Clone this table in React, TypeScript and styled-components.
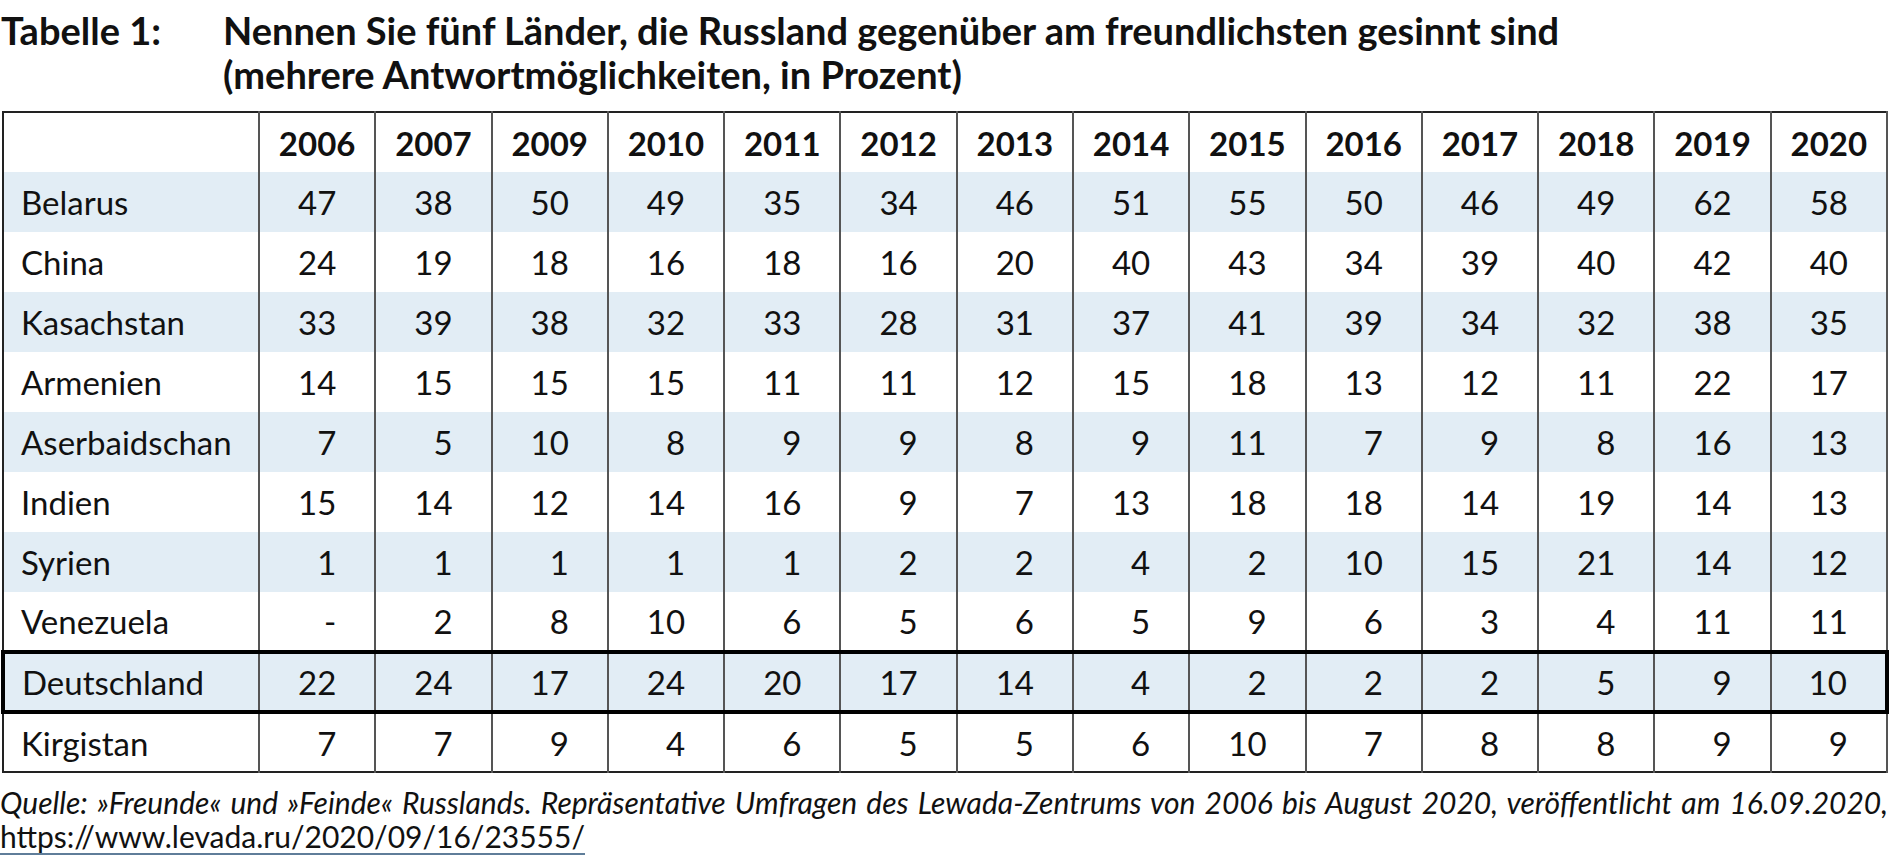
import { createGlobalStyle, styled } from "styled-components";

const GlobalStyle = createGlobalStyle`
  html, body {
    margin: 0;
    padding: 0;
    background: #ffffff;
  }
  body {
    font-family: Lato, "Open Sans", "Liberation Sans", sans-serif;
    color: #111111;
  }
`;

const Page = styled.div`
  width: 1892px;
  padding-top: 8px;
`;

const Title = styled.div`
  display: grid;
  grid-template-columns: 222px 1fr;
  font-size: 38px;
  line-height: 44px;
  font-weight: 700;
  padding-left: 1px;
`;

const Table = styled.table`
  margin-top: 15px;
  margin-left: 1px;
  width: 1888px;
  table-layout: fixed;
  border-collapse: collapse;
  border: 2px solid #222;
  font-size: 33px;
`;

const Row = styled.tr<{ $striped?: boolean; $marked?: boolean }>`
  height: 60px;
  background: ${(p) => (p.$striped ? "#e2edf5" : "#ffffff")};
  border: ${(p) => (p.$marked ? "4px solid #000" : "none")};
`;

const HeadCell = styled.th`
  font-weight: 700;
  text-align: center;
  padding: 0;
  border-left: 2px solid #555;
  border-right: 2px solid #555;
`;

const NameCell = styled.td`
  width: 237px;
  padding: 0 0 0 17px;
  text-align: left;
  border-right: 2px solid #555;
`;

const NumCell = styled.td`
  padding: 0 38px 0 0;
  text-align: right;
  border-left: 2px solid #555;
  border-right: 2px solid #555;
`;

const Source = styled.p`
  margin: 12px 0 0 0;
  width: 1888px;
  font-size: 30px;
  line-height: 34px;
  font-style: italic;
  text-align: justify;
`;

const Link = styled.span`
  display: inline-block;
  font-style: normal;
  white-space: nowrap;
  line-height: 30px;
  padding-bottom: 2px;
  border-bottom: 2px solid #5f7d99;
`;

const years = [2006, 2007, 2009, 2010, 2011, 2012, 2013, 2014, 2015, 2016, 2017, 2018, 2019, 2020];

const rows: { name: string; values: string[] }[] = [
  { name: "Belarus", values: ["47", "38", "50", "49", "35", "34", "46", "51", "55", "50", "46", "49", "62", "58"] },
  { name: "China", values: ["24", "19", "18", "16", "18", "16", "20", "40", "43", "34", "39", "40", "42", "40"] },
  { name: "Kasachstan", values: ["33", "39", "38", "32", "33", "28", "31", "37", "41", "39", "34", "32", "38", "35"] },
  { name: "Armenien", values: ["14", "15", "15", "15", "11", "11", "12", "15", "18", "13", "12", "11", "22", "17"] },
  { name: "Aserbaidschan", values: ["7", "5", "10", "8", "9", "9", "8", "9", "11", "7", "9", "8", "16", "13"] },
  { name: "Indien", values: ["15", "14", "12", "14", "16", "9", "7", "13", "18", "18", "14", "19", "14", "13"] },
  { name: "Syrien", values: ["1", "1", "1", "1", "1", "2", "2", "4", "2", "10", "15", "21", "14", "12"] },
  { name: "Venezuela", values: ["-", "2", "8", "10", "6", "5", "6", "5", "9", "6", "3", "4", "11", "11"] },
  { name: "Deutschland", values: ["22", "24", "17", "24", "20", "17", "14", "4", "2", "2", "2", "5", "9", "10"] },
  { name: "Kirgistan", values: ["7", "7", "9", "4", "6", "5", "5", "6", "10", "7", "8", "8", "9", "9"] },
];

export default function App() {
  return (
    <Page>
      <GlobalStyle />
      <Title>
        <span>Tabelle 1:</span>
        <span>
          Nennen Sie fünf Länder, die Russland gegenüber am freundlichsten gesinnt sind
          <br />
          (mehrere Antwortmöglichkeiten, in Prozent)
        </span>
      </Title>
      <Table>
        <thead>
          <Row>
            <NameCell as="th" />
            {years.map((y) => (
              <HeadCell key={y}>{y}</HeadCell>
            ))}
          </Row>
        </thead>
        <tbody>
          {rows.map((r, i) => (
            <Row key={r.name} $striped={i % 2 === 0} $marked={r.name === "Deutschland"}>
              <NameCell>{r.name}</NameCell>
              {r.values.map((v, j) => (
                <NumCell key={j}>{v}</NumCell>
              ))}
            </Row>
          ))}
        </tbody>
      </Table>
      <Source>
        Quelle: »Freunde« und »Feinde« Russlands. Repräsentative Umfragen des Lewada-Zentrums von 2006 bis
        August 2020, veröffentlicht am 16.09.2020, <Link>https://www.levada.ru/2020/09/16/23555/</Link>
      </Source>
    </Page>
  );
}
